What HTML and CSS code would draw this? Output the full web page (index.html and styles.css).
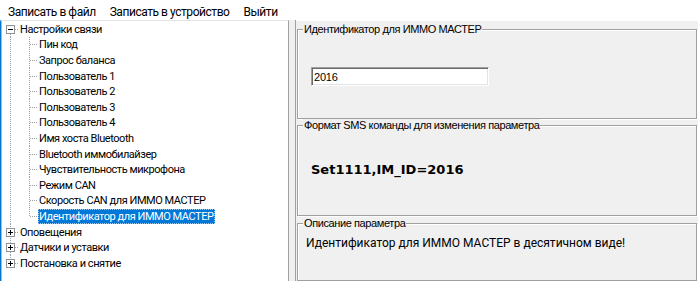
FILE: index.html
```html
<!DOCTYPE html>
<html lang="ru">
  <head>
    <meta charset="UTF-8" />
    <title>Настройки устройства</title>

    <!-- Styles -->
    <link rel="stylesheet" href="styles.css">
  </head>
  <body>
    <!-- Menu -->
    <div class="menu">
      <span class="menu-item">Записать в файл</span>
      <span class="menu-item">Записать в устройство</span>
      <span class="menu-item">Выйти</span>
    </div>

    <div class="main">
      <!-- Settings tree -->
      <div class="tree">
        <div class="row root first">
          <span class="gutter"><span class="expander minus"></span></span>
          <span class="label">Настройки связи</span>
        </div>
        <div class="children">
          <div class="row child"><span class="branch"></span><span class="label">Пин код</span></div>
          <div class="row child"><span class="branch"></span><span class="label">Запрос баланса</span></div>
          <div class="row child"><span class="branch"></span><span class="label">Пользователь 1</span></div>
          <div class="row child"><span class="branch"></span><span class="label">Пользователь 2</span></div>
          <div class="row child"><span class="branch"></span><span class="label">Пользователь 3</span></div>
          <div class="row child"><span class="branch"></span><span class="label">Пользователь 4</span></div>
          <div class="row child"><span class="branch"></span><span class="label">Имя хоста Bluetooth</span></div>
          <div class="row child"><span class="branch"></span><span class="label">Bluetooth иммобилайзер</span></div>
          <div class="row child"><span class="branch"></span><span class="label">Чувствительность микрофона</span></div>
          <div class="row child"><span class="branch"></span><span class="label">Режим CAN</span></div>
          <div class="row child"><span class="branch"></span><span class="label">Скорость CAN для ИММО МАСТЕР</span></div>
          <div class="row child last"><span class="branch"></span><span class="label selected">Идентификатор для ИММО МАСТЕР</span></div>
        </div>
        <div class="row root">
          <span class="gutter"><span class="expander plus"></span></span>
          <span class="label">Оповещения</span>
        </div>
        <div class="row root">
          <span class="gutter"><span class="expander plus"></span></span>
          <span class="label">Датчики и уставки</span>
        </div>
        <div class="row root last">
          <span class="gutter"><span class="expander plus"></span></span>
          <span class="label">Постановка и снятие</span>
        </div>
      </div>

      <div class="splitter"></div>

      <!-- Parameter panel -->
      <div class="panel">
        <div class="group group-value">
          <div class="group-title">Идентификатор для ИММО МАСТЕР</div>
          <input class="value-input" type="text" value="2016" readonly />
        </div>

        <div class="group group-sms">
          <div class="group-title">Формат SMS команды для изменения параметра</div>
          <div class="sms-command">Set1111,IM_ID=2016</div>
        </div>

        <div class="group group-desc">
          <div class="group-title">Описание параметра</div>
          <div class="description">Идентификатор для ИММО МАСТЕР в десятичном виде!</div>
        </div>
      </div>
    </div>
  </body>
</html>
```

FILE: styles.css
```css
/* General Styles */
* {
  box-sizing: border-box;
}

html,
body {
  height: 100%;
}

body {
  margin: 0;
  overflow: hidden;
  display: flex;
  flex-direction: column;
  background: #f0f0f0;
  color: #000;
  font-family: Roboto, "Liberation Sans", sans-serif;
  font-size: 11px;
  letter-spacing: -0.45px;
}

/* Menu Styles */
.menu {
  height: 20px;
  flex: none;
  display: flex;
  padding: 4px 0 0 1px;
  background: #fff;
}

.menu-item {
  padding: 0 7px;
  line-height: 16px;
  font-size: 12px;
  letter-spacing: -0.45px;
}

.main {
  flex: 1;
  min-height: 0;
  display: flex;
}

/* Tree Styles */
.tree {
  width: 289px;
  flex: none;
  padding-top: 0.5px;
  background: #fff;
  border-top: 1px solid #e3e3e3;
  border-left: 1px solid #0078d7;
  border-right: 1px solid #a0a0a0;
  box-shadow: inset 1px 0 0 #8cbff0;
}

.row {
  height: 15.6px;
  display: flex;
  align-items: center;
  white-space: nowrap;
}

.label {
  line-height: 15px;
  padding: 0 2px 0 1px;
}

.label.selected {
  background: #0078d7;
  color: #fff;
  outline: 1px dotted #9ccbf2;
  outline-offset: -1px;
}

.gutter {
  width: 18px;
  height: 100%;
  flex: none;
  display: flex;
  align-items: center;
  padding-left: 5px;
  background-image:
    repeating-linear-gradient(to bottom, #a0a0a0 0 1px, transparent 1px 2px),
    repeating-linear-gradient(to right, #a0a0a0 0 1px, transparent 1px 2px);
  background-size: 1px 100%, 4px 1px;
  background-position: 9px 0, 14px 50%;
  background-repeat: no-repeat;
}

.root.first .gutter {
  background-size: 1px 50%, 4px 1px;
  background-position: 9px 100%, 14px 50%;
}

.root.last .gutter {
  background-size: 1px 50%, 4px 1px;
  background-position: 9px 0, 14px 50%;
}

.expander {
  position: relative;
  width: 9px;
  height: 9px;
  border: 1px solid #919191;
  background: #fff;
}

.expander::before,
.expander::after {
  content: "";
  position: absolute;
  background: #000;
}

.expander::before {
  left: 1px;
  top: 3px;
  width: 5px;
  height: 1px;
}

.expander.plus::after {
  left: 3px;
  top: 1px;
  width: 1px;
  height: 5px;
}

.children {
  padding-left: 19px;
  background-image: repeating-linear-gradient(to bottom, #a0a0a0 0 1px, transparent 1px 2px);
  background-size: 1px 100%;
  background-position: 9px 0;
  background-repeat: no-repeat;
}

.branch {
  width: 18px;
  height: 100%;
  flex: none;
  background-image:
    repeating-linear-gradient(to bottom, #a0a0a0 0 1px, transparent 1px 2px),
    repeating-linear-gradient(to right, #a0a0a0 0 1px, transparent 1px 2px);
  background-size: 1px 100%, 8px 1px;
  background-position: 9px 0, 10px 50%;
  background-repeat: no-repeat;
}

.child.last .branch {
  background-size: 1px 50%, 8px 1px;
}

/* Splitter */
.splitter {
  width: 7px;
  flex: none;
  border-right: 1px solid #a0a0a0;
}

/* Panel Styles */
.panel {
  flex: 1;
  min-width: 0;
  display: flex;
  flex-direction: column;
  padding: 8px 1px 0 1px;
  border-top: 1px solid #fff;
}

.group {
  border: 1px solid #a0a0a0;
  box-shadow: 1px 1px 0 #fff, inset 1px 1px 0 #fff;
  font-family: "Liberation Sans", sans-serif;
  font-size: 11px;
  letter-spacing: -0.4px;
}

.group-value {
  height: 90px;
}

.group-sms {
  height: 91px;
  margin-top: 6px;
}

.group-desc {
  flex: 1;
  margin-top: 7px;
}

.group-title {
  width: fit-content;
  margin: -7px 0 0 5px;
  padding: 0 1px;
  line-height: 13px;
  background: #f0f0f0;
}

.value-input {
  display: block;
  width: 178px;
  height: 19px;
  margin: 31px 0 0 13px;
  padding: 0 2px;
  border: 1px solid;
  border-color: #a0a0a0 #fff #fff #a0a0a0;
  box-shadow: inset 1px 1px 0 #696969, inset -1px -1px 0 #e3e3e3;
  background: #fff;
  font-family: "Liberation Sans", sans-serif;
  font-size: 11px;
  letter-spacing: -0.2px;
  color: #000;
  outline: none;
}

.sms-command {
  margin: 30px 0 0 13px;
  line-height: 16px;
  font-family: "DejaVu Sans", Verdana, sans-serif;
  font-size: 13px;
  font-weight: bold;
  letter-spacing: 0;
}

.description {
  margin: 6px 0 0 8px;
  line-height: 15px;
  font-family: Roboto, "Liberation Sans", sans-serif;
  font-size: 12px;
  letter-spacing: 0;
}
```
